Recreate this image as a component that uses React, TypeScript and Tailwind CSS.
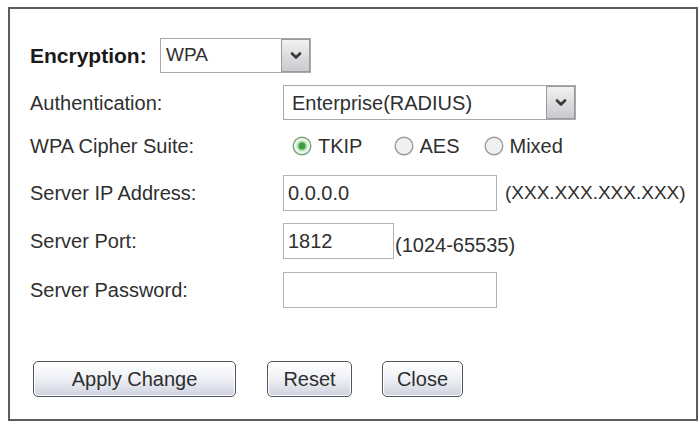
import React from 'react';

const font = { fontFamily: '"Liberation Sans", Arial, sans-serif' };

function Arrow() {
  return (
    <div className="flex h-full w-[29px] items-center justify-center border border-[#9a9a9a] bg-gradient-to-b from-[#f2f2f2] to-[#c9c9cf]">
      <svg width="12" height="8" viewBox="0 0 12 8">
        <path d="M2 1.5 L6 5.5 L10 1.5" fill="none" stroke="#3a3a3a" strokeWidth="2.6" strokeLinecap="round" strokeLinejoin="round" />
      </svg>
    </div>
  );
}

function Radio({ checked }: { checked?: boolean }) {
  return (
    <svg width="20" height="20" viewBox="0 0 20 20">
      <circle cx="10" cy="10" r="8.8" fill={checked ? '#eef6ee' : '#f0f0f0'} stroke={checked ? '#7aa37a' : '#9a9a9a'} strokeWidth="1.4" />
      {checked && <circle cx="10" cy="10" r="5.4" fill="#a8dca8" />}
      {checked && <circle cx="10" cy="10" r="3.4" fill="#3f9c3f" />}
    </svg>
  );
}

function Button({ label, width }: { label: string; width: string }) {
  return (
    <button
      className={`${width} h-[36px] rounded-[5px] border-[1.5px] border-[#50545c] bg-gradient-to-b from-[#ffffff] via-[#eef0f5] to-[#cfd3e0] text-[20px] text-[#2e2e2e] shadow-[inset_0_0_0_1px_#ffffff]`}
    >
      {label}
    </button>
  );
}

export default function App() {
  return (
    <div className="h-[426px] w-[700px] bg-white" style={font}>
      <div className="ml-[8px] mt-[7px] h-[414px] w-[690px] border-2 border-[#5c5c5c] pl-[20px] pt-[29px] text-[20px] text-[#2f2f2f]">
        {/* Encryption */}
        <div className="flex h-[35px] items-center">
          <span className="w-[130px] text-[21px] font-bold text-[#1a1a1a]">Encryption:</span>
          <div className="flex h-[35px] w-[151px] items-center border border-[#a9a9a9]">
            <span className="flex-1 pl-[5px] text-[19px]">WPA</span>
            <Arrow />
          </div>
        </div>

        {/* Authentication */}
        <div className="mt-[12px] flex h-[35px] items-center">
          <span className="w-[253px]">Authentication:</span>
          <div className="flex h-[35px] w-[293px] items-center border border-[#a9a9a9]">
            <span className="flex-1 pl-[8px]">Enterprise(RADIUS)</span>
            <Arrow />
          </div>
        </div>

        {/* Cipher suite */}
        <div className="mt-[14px] flex h-[24px] items-center">
          <span className="w-[253px]">WPA Cipher Suite:</span>
          <div className="ml-[9px] flex items-center">
            <Radio checked />
            <span className="ml-[6px]">TKIP</span>
            <span className="ml-[32px] flex items-center">
              <Radio />
            </span>
            <span className="ml-[5px]">AES</span>
            <span className="ml-[25px] flex items-center">
              <Radio />
            </span>
            <span className="ml-[5px]">Mixed</span>
          </div>
        </div>

        {/* Server IP */}
        <div className="mt-[17px] flex h-[36px] items-center">
          <span className="w-[253px]">Server IP Address:</span>
          <div className="flex h-[36px] w-[214px] items-center border border-[#b3b3b3] pl-[4px]">0.0.0.0</div>
          <span className="ml-[8px] text-[19px]">(XXX.XXX.XXX.XXX)</span>
        </div>

        {/* Server port */}
        <div className="mt-[12px] flex h-[36px] items-center">
          <span className="w-[253px]">Server Port:</span>
          <div className="flex h-[36px] w-[111px] items-center border border-[#b3b3b3] pl-[4px]">1812</div>
          <span className="ml-[1px] mt-[8px]">(1024-65535)</span>
        </div>

        {/* Server password */}
        <div className="mt-[13px] flex h-[36px] items-center">
          <span className="w-[253px]">Server Password:</span>
          <div className="h-[36px] w-[214px] border border-[#b3b3b3]" />
        </div>

        {/* Buttons */}
        <div className="mt-[53px] flex items-center">
          <div className="ml-[3px]">
            <Button label="Apply Change" width="w-[203px]" />
          </div>
          <div className="ml-[31px]">
            <Button label="Reset" width="w-[85px]" />
          </div>
          <div className="ml-[30px]">
            <Button label="Close" width="w-[81px]" />
          </div>
        </div>
      </div>
    </div>
  );
}
